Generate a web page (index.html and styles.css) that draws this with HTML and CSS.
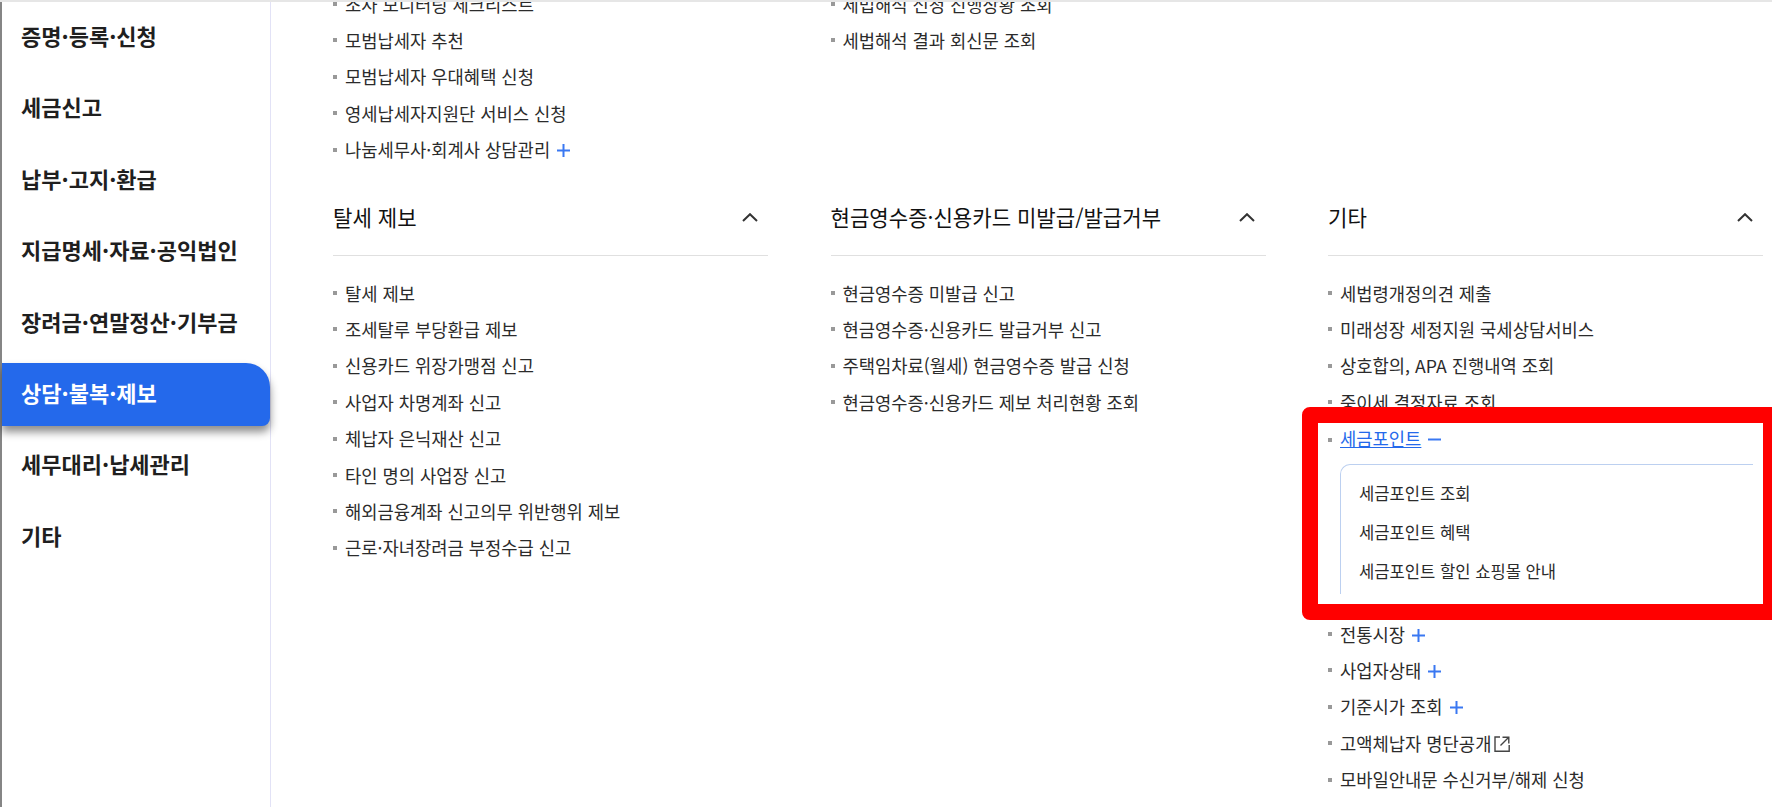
FILE: index.html
```html
<!DOCTYPE html>
<html lang="ko">
<head>
<meta charset="utf-8">
<title>상담·불복·제보</title>
<link rel="stylesheet" href="styles.css">
</head>
<body>
<div class="page">
  <nav class="side">
    <a class="side-item">증명·등록·신청</a>
    <a class="side-item">세금신고</a>
    <a class="side-item">납부·고지·환급</a>
    <a class="side-item">지급명세·자료·공익법인</a>
    <a class="side-item">장려금·연말정산·기부금</a>
    <a class="side-item active">상담·불복·제보</a>
    <a class="side-item">세무대리·납세관리</a>
    <a class="side-item">기타</a>
  </nav>
  <main class="main">
    <div class="grid">
      <section class="sec">
        <ul class="list">
          <li class="row">조사 모니터링 체크리스트</li>
          <li class="row">모범납세자 추천</li>
          <li class="row">모범납세자 우대혜택 신청</li>
          <li class="row">영세납세자지원단 서비스 신청</li>
          <li class="row">나눔세무사·회계사 상담관리<svg class="pm" viewBox="0 0 13 13"><path d="M0 6.5H13M6.5 0V13"/></svg></li>
        </ul>
      </section>
      <section class="sec">
        <ul class="list">
          <li class="row">세법해석 신청 진행상황 조회</li>
          <li class="row">세법해석 결과 회신문 조회</li>
        </ul>
      </section>
      <section class="sec"></section>

      <section class="sec">
        <header class="head"><h3 class="title">탈세 제보</h3><svg class="chev" viewBox="0 0 16 9"><path d="M1 8L8 1.2L15 8"/></svg></header>
        <ul class="list">
          <li class="row">탈세 제보</li>
          <li class="row">조세탈루 부당환급 제보</li>
          <li class="row">신용카드 위장가맹점 신고</li>
          <li class="row">사업자 차명계좌 신고</li>
          <li class="row">체납자 은닉재산 신고</li>
          <li class="row">타인 명의 사업장 신고</li>
          <li class="row">해외금융계좌 신고의무 위반행위 제보</li>
          <li class="row">근로·자녀장려금 부정수급 신고</li>
        </ul>
      </section>
      <section class="sec">
        <header class="head"><h3 class="title">현금영수증·신용카드 미발급/발급거부</h3><svg class="chev" viewBox="0 0 16 9"><path d="M1 8L8 1.2L15 8"/></svg></header>
        <ul class="list">
          <li class="row">현금영수증 미발급 신고</li>
          <li class="row">현금영수증·신용카드 발급거부 신고</li>
          <li class="row">주택임차료(월세) 현금영수증 발급 신청</li>
          <li class="row">현금영수증·신용카드 제보 처리현황 조회</li>
        </ul>
      </section>
      <section class="sec">
        <header class="head"><h3 class="title">기타</h3><svg class="chev" viewBox="0 0 16 9"><path d="M1 8L8 1.2L15 8"/></svg></header>
        <ul class="list">
          <li class="row">세법령개정의견 제출</li>
          <li class="row">미래성장 세정지원 국세상담서비스</li>
          <li class="row">상호합의, APA 진행내역 조회</li>
          <li class="row">중이세 결정자료 조회</li>
          <li class="mark">
            <div class="row row-open"><a class="link">세금포인트</a><svg class="pm" viewBox="0 0 13 13"><path d="M0 6.5H13"/></svg></div>
            <ul class="sub">
              <li class="sub-row">세금포인트 조회</li>
              <li class="sub-row">세금포인트 혜택</li>
              <li class="sub-row">세금포인트 할인 쇼핑몰 안내</li>
            </ul>
          </li>
          <li class="row">전통시장<svg class="pm" viewBox="0 0 13 13"><path d="M0 6.5H13M6.5 0V13"/></svg></li>
          <li class="row">사업자상태<svg class="pm" viewBox="0 0 13 13"><path d="M0 6.5H13M6.5 0V13"/></svg></li>
          <li class="row">기준시가 조회<svg class="pm" viewBox="0 0 13 13"><path d="M0 6.5H13M6.5 0V13"/></svg></li>
          <li class="row">고액체납자 명단공개<svg class="ext" viewBox="0 0 16 16"><path d="M6 1H1V15.2H15.2V9"/><path d="M6.5 9.5L14.5 1.5M8.5 1.2H14.8V7.5"/></svg></li>
          <li class="row">모바일안내문 수신거부/해제 신청</li>
        </ul>
      </section>
    </div>
  </main>
</div>
</body>
</html>
```
FILE: styles.css
```css
* { box-sizing: border-box; }
html, body { margin: 0; padding: 0; height: 807px; overflow: hidden; background: #fff; }
body { font-family: "Noto Sans CJK KR", "Noto Sans", sans-serif; color: #2b2b2b; }
ul { list-style: none; margin: 0; padding: 0; }
h3 { margin: 0; }

.page { display: flex; height: 807px; border-top: 2px solid #e6e6e6; overflow: hidden; }

.side { width: 271px; flex: none; height: 100%; border-left: 2px solid #858585; border-right: 1px solid #e2e2f6; padding-top: 4px; display: flex; flex-direction: column; gap: 8.4px; }
.side-item { display: flex; align-items: center; height: 63px; padding: 0 0 5px 19px; font-size: 22px; font-weight: 700; color: #1f1f1f; }
.side-item.active { background: #2469eb; color: #fff; border-radius: 0 24px 8px 0; box-shadow: 0 6px 8px rgba(0, 0, 0, .45); }

.main { flex: 1; min-width: 0; padding-left: 62px; }
.grid { display: grid; grid-template-columns: repeat(3, 435px); column-gap: 62.5px; margin-top: -15px; }

.head { display: flex; align-items: center; justify-content: space-between; height: 67px; margin-top: 20px; padding: 0 10.5px 9px 0; border-bottom: 1px solid #e0e0e0; }
.title { font-size: 21.1px; font-weight: 400; color: #111; }
.chev { width: 16px; height: 9px; fill: none; stroke: #333; stroke-width: 2; }
.head + .list { margin-top: 20px; }

.row { position: relative; display: flex; align-items: center; height: 36.4px; padding: 0 0 3px 12px; font-size: 17.7px; color: #2b2b2b; white-space: nowrap; }
.row::before { content: ""; position: absolute; left: 0; top: 15px; width: 4px; height: 4px; background: #999; }
.row-open { padding-bottom: 6px; }

.pm { width: 13px; height: 13px; margin: 3px 0 0 7px; fill: none; stroke: #3a78f2; stroke-width: 2; flex: none; }
.ext { width: 16px; height: 16px; margin: 3px 0 0 3px; fill: none; stroke: #444; stroke-width: 1.4; flex: none; }
.link { color: #2469eb; text-decoration: underline; }

.mark { position: relative; z-index: 1; margin: -15px -16px -2.5px -26px; height: 213px; padding: 0 0 0 10px; background: #fff; border: 16px solid #f00; border-radius: 8px; }
.sub { margin: 5px 10px 0 12px; padding: 8.5px 0 0 18px; height: 130px; border: solid #bcd0f0; border-width: 1px 0 0 1px; border-top-left-radius: 10px; }
.sub-row { height: 39px; display: flex; align-items: center; font-size: 16.6px; color: #2b2b2b; }
```
